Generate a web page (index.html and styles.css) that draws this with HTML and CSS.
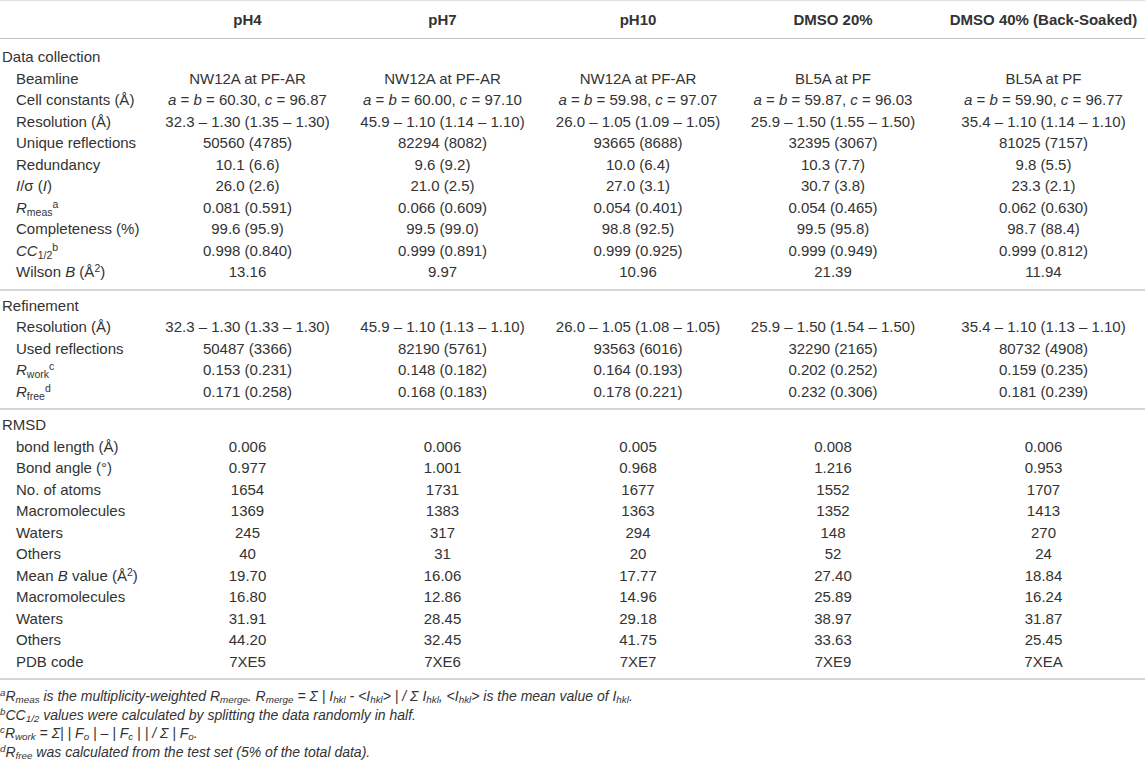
FILE: index.html
```html
<!DOCTYPE html>
<html lang="en">
<head>
    <meta charset="UTF-8">
    <meta name="viewport" content="width=device-width, initial-scale=1.0">
    <title>Crystallographic data collection and refinement statistics</title>
    <link rel="stylesheet" href="styles.css">
</head>
<body>

    <table class="data-table">
        <colgroup>
            <col class="col-label">
            <col class="col-data">
            <col class="col-data">
            <col class="col-data-w">
            <col class="col-data-n">
            <col class="col-last">
        </colgroup>
        <thead>
            <tr>
                <th></th>
                <th>pH4</th>
                <th>pH7</th>
                <th>pH10</th>
                <th>DMSO 20%</th>
                <th>DMSO 40% (Back-Soaked)</th>
            </tr>
        </thead>

        <!-- Data collection -->
        <tbody class="section first">
            <tr class="group"><td colspan="6">Data collection</td></tr>
            <tr><td class="label">Beamline</td><td>NW12A at PF-AR</td><td>NW12A at PF-AR</td><td>NW12A at PF-AR</td><td>BL5A at PF</td><td>BL5A at PF</td></tr>
            <tr><td class="label">Cell constants (Å)</td><td><i>a</i> = <i>b</i> = 60.30, <i>c</i> = 96.87</td><td><i>a</i> = <i>b</i> = 60.00, <i>c</i> = 97.10</td><td><i>a</i> = <i>b</i> = 59.98, <i>c</i> = 97.07</td><td><i>a</i> = <i>b</i> = 59.87, <i>c</i> = 96.03</td><td><i>a</i> = <i>b</i> = 59.90, <i>c</i> = 96.77</td></tr>
            <tr><td class="label">Resolution (Å)</td><td>32.3 – 1.30 (1.35 – 1.30)</td><td>45.9 – 1.10 (1.14 – 1.10)</td><td>26.0 – 1.05 (1.09 – 1.05)</td><td>25.9 – 1.50 (1.55 – 1.50)</td><td>35.4 – 1.10 (1.14 – 1.10)</td></tr>
            <tr><td class="label">Unique reflections</td><td>50560 (4785)</td><td>82294 (8082)</td><td>93665 (8688)</td><td>32395 (3067)</td><td>81025 (7157)</td></tr>
            <tr><td class="label">Redundancy</td><td>10.1 (6.6)</td><td>9.6 (9.2)</td><td>10.0 (6.4)</td><td>10.3 (7.7)</td><td>9.8 (5.5)</td></tr>
            <tr><td class="label"><i>I</i>/σ (<i>I</i>)</td><td>26.0 (2.6)</td><td>21.0 (2.5)</td><td>27.0 (3.1)</td><td>30.7 (3.8)</td><td>23.3 (2.1)</td></tr>
            <tr><td class="label"><i>R</i><sub>meas</sub><sup>a</sup></td><td>0.081 (0.591)</td><td>0.066 (0.609)</td><td>0.054 (0.401)</td><td>0.054 (0.465)</td><td>0.062 (0.630)</td></tr>
            <tr><td class="label">Completeness (%)</td><td>99.6 (95.9)</td><td>99.5 (99.0)</td><td>98.8 (92.5)</td><td>99.5 (95.8)</td><td>98.7 (88.4)</td></tr>
            <tr><td class="label"><i>CC</i><sub>1/2</sub><sup>b</sup></td><td>0.998 (0.840)</td><td>0.999 (0.891)</td><td>0.999 (0.925)</td><td>0.999 (0.949)</td><td>0.999 (0.812)</td></tr>
            <tr class="end"><td class="label">Wilson <i>B</i> (Å<sup>2</sup>)</td><td>13.16</td><td>9.97</td><td>10.96</td><td>21.39</td><td>11.94</td></tr>
        </tbody>

        <!-- Refinement -->
        <tbody class="section">
            <tr class="group"><td colspan="6">Refinement</td></tr>
            <tr><td class="label">Resolution (Å)</td><td>32.3 – 1.30 (1.33 – 1.30)</td><td>45.9 – 1.10 (1.13 – 1.10)</td><td>26.0 – 1.05 (1.08 – 1.05)</td><td>25.9 – 1.50 (1.54 – 1.50)</td><td>35.4 – 1.10 (1.13 – 1.10)</td></tr>
            <tr><td class="label">Used reflections</td><td>50487 (3366)</td><td>82190 (5761)</td><td>93563 (6016)</td><td>32290 (2165)</td><td>80732 (4908)</td></tr>
            <tr><td class="label"><i>R</i><sub>work</sub><sup>c</sup></td><td>0.153 (0.231)</td><td>0.148 (0.182)</td><td>0.164 (0.193)</td><td>0.202 (0.252)</td><td>0.159 (0.235)</td></tr>
            <tr class="end"><td class="label"><i>R</i><sub>free</sub><sup>d</sup></td><td>0.171 (0.258)</td><td>0.168 (0.183)</td><td>0.178 (0.221)</td><td>0.232 (0.306)</td><td>0.181 (0.239)</td></tr>
        </tbody>

        <!-- RMSD -->
        <tbody class="section">
            <tr class="group"><td colspan="6">RMSD</td></tr>
            <tr><td class="label">bond length (Å)</td><td>0.006</td><td>0.006</td><td>0.005</td><td>0.008</td><td>0.006</td></tr>
            <tr><td class="label">Bond angle (°)</td><td>0.977</td><td>1.001</td><td>0.968</td><td>1.216</td><td>0.953</td></tr>
            <tr><td class="label">No. of atoms</td><td>1654</td><td>1731</td><td>1677</td><td>1552</td><td>1707</td></tr>
            <tr><td class="label">Macromolecules</td><td>1369</td><td>1383</td><td>1363</td><td>1352</td><td>1413</td></tr>
            <tr><td class="label">Waters</td><td>245</td><td>317</td><td>294</td><td>148</td><td>270</td></tr>
            <tr><td class="label">Others</td><td>40</td><td>31</td><td>20</td><td>52</td><td>24</td></tr>
            <tr><td class="label">Mean <i>B</i> value (Å<sup>2</sup>)</td><td>19.70</td><td>16.06</td><td>17.77</td><td>27.40</td><td>18.84</td></tr>
            <tr><td class="label">Macromolecules</td><td>16.80</td><td>12.86</td><td>14.96</td><td>25.89</td><td>16.24</td></tr>
            <tr><td class="label">Waters</td><td>31.91</td><td>28.45</td><td>29.18</td><td>38.97</td><td>31.87</td></tr>
            <tr><td class="label">Others</td><td>44.20</td><td>32.45</td><td>41.75</td><td>33.63</td><td>25.45</td></tr>
            <tr class="end"><td class="label">PDB code</td><td>7XE5</td><td>7XE6</td><td>7XE7</td><td>7XE9</td><td>7XEA</td></tr>
        </tbody>
    </table>

    <div class="notes">
        <p><sup>a</sup>R<sub>meas</sub> is the multiplicity-weighted R<sub>merge</sub>. R<sub>merge</sub> = Σ | I<sub>hkl</sub> - &lt;I<sub>hkl</sub>&gt; | / Σ I<sub>hkl</sub>, &lt;I<sub>hkl</sub>&gt; is the mean value of I<sub>hkl</sub>.</p>
        <p><sup>b</sup>CC<sub>1/2</sub> values were calculated by splitting the data randomly in half.</p>
        <p><sup>c</sup>R<sub>work</sub> = Σ| | F<sub>o</sub> | – | F<sub>c</sub> | | / Σ | F<sub>o</sub>.</p>
        <p><sup>d</sup>R<sub>free</sub> was calculated from the test set (5% of the total data).</p>
    </div>

</body>
</html>
```

FILE: styles.css
```css
* { margin: 0; padding: 0; box-sizing: border-box; }
body {
    font-family: "Liberation Sans", Arial, sans-serif;
    color: #333;
    background-color: #fff;
}

/* 表格主体 */
.data-table {
    width: 1145px;
    border-collapse: collapse;
    table-layout: fixed;
    font-size: 15px;
    line-height: 21.5px;
    border-top: 1px solid #e0e0e0;
}
.col-label { width: 150px; }
.col-data { width: 195px; }
.col-data-w { width: 196px; }
.col-data-n { width: 194px; }
.col-last { width: 215px; }

.data-table th {
    height: 38px;
    font-weight: bold;
    text-align: center;
    vertical-align: middle;
    white-space: nowrap;
    border-bottom: 1px solid #c4c4c4;
}
.data-table td { text-align: center; white-space: nowrap; }
.data-table th:last-child,
.data-table td:last-child { padding-left: 12px; }

.data-table td.label { text-align: left; padding-left: 16px; }
.data-table .group td { text-align: left; padding-left: 2px; padding-top: 4px; }
.data-table .first .group td { padding-top: 7px; }
.data-table .end td { padding-bottom: 6px; }

.section { border-bottom: 2px solid #d6d6d6; }

sub, sup { font-size: 0.7em; line-height: 0; }
sub { vertical-align: -0.25em; }
sup { vertical-align: 0.5em; }

/* 表格注释 */
.notes {
    font-style: italic;
    font-size: 14px;
    line-height: 18.5px;
    padding-top: 7px;
}
.notes sup { font-size: 0.7em; }
```
